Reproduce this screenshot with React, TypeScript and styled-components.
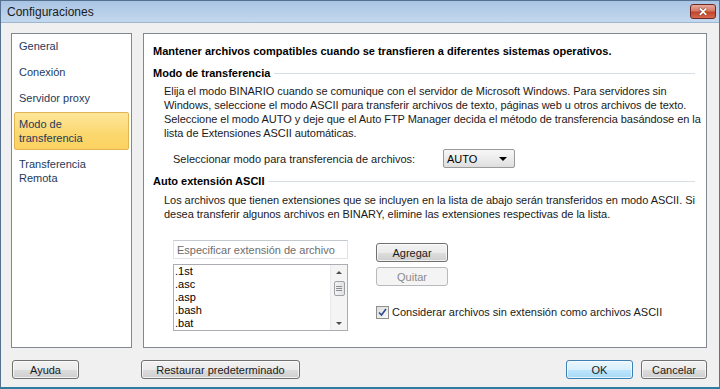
import React from "react"
import styled, { createGlobalStyle } from "styled-components"

const GlobalStyle = createGlobalStyle`
  html, body {
    margin: 0;
    padding: 0;
  }
  body {
    width: 720px;
    height: 389px;
    overflow: hidden;
    font-family: "Liberation Sans", Arial, sans-serif;
    font-size: 11px;
    color: #000;
    background: #fff;
  }
`

const Window = styled.div`
  width: 720px;
  height: 389px;
  box-sizing: border-box;
  display: flex;
  flex-direction: column;
  border: 1px solid #56708f;
  border-bottom: 2px solid #2c7d9e;
  border-right-color: #3d7ea3;
  background: #f0f0f0;
`

const TitleBar = styled.div`
  height: 21px;
  flex: none;
  display: flex;
  align-items: center;
  padding: 0 3px 0 6px;
  background: linear-gradient(#a9c4e3, #b7cfea 55%, #c3d8ee);
  border-bottom: 1px solid #9fb6cf;
`

const Title = styled.div`
  flex: 1;
  font-size: 12px;
  color: #1b1b1b;
`

const CloseButton = styled.div`
  width: 26px;
  height: 15px;
  box-sizing: border-box;
  border: 1px solid #6e2a20;
  border-radius: 3px;
  background: linear-gradient(#e6aa9d, #d67a67 45%, #c1432c 55%, #d6694f);
  display: flex;
  align-items: center;
  justify-content: center;
  color: #fff;
  font-weight: bold;
  font-size: 12px;
  text-shadow: 0 0 1px #4a1208, 0 0 1px #4a1208;
`

const Body = styled.div`
  flex: 1;
  display: flex;
  flex-direction: column;
  padding: 10px 12px 0 10px;
`

const Main = styled.div`
  height: 315px;
  display: flex;
  gap: 11px;
`

const Panel = styled.div`
  box-sizing: border-box;
  height: 100%;
  background: #fff;
  border: 1px solid #828790;
`

const NavPanel = styled(Panel)`
  width: 121px;
  flex: none;
  display: flex;
  flex-direction: column;
  gap: 2px;
  padding: 0 2px;
`

const NavItem = styled.div<{ $active?: boolean }>`
  box-sizing: border-box;
  padding: 4px 4px;
  line-height: 14px;
  color: #1e395b;
  border: 1px solid ${(p) => (p.$active ? "#e3b552" : "transparent")};
  border-radius: 2px;
  background: ${(p) =>
    p.$active ? "linear-gradient(#fde69a, #fbd76d 60%, #fbd261)" : "transparent"};
`

const ContentPanel = styled(Panel)`
  flex: 1;
  min-width: 0;
  overflow: hidden;
  padding: 10px 11px 0 9px;
  line-height: 14px;
`

const Heading = styled.div`
  font-weight: bold;
`

const GroupHeader = styled.div<{ $top: number }>`
  display: flex;
  align-items: center;
  margin-top: ${(p) => p.$top}px;
  font-weight: bold;
  &::after {
    content: "";
    flex: 1;
    margin-left: 4px;
    border-top: 1px solid #d5dfe5;
  }
`

const Paragraph = styled.p<{ $top: number }>`
  margin: ${(p) => p.$top}px 0 0 11px;
  color: #1a1a1a;
  white-space: nowrap;
  letter-spacing: -0.05px;
`

const SelectRow = styled.div`
  display: flex;
  align-items: center;
  margin: 9px 0 0 20px;
`

const SelectLabel = styled.div`
  width: 270px;
  color: #1a1a1a;
`

const Combo = styled.div`
  width: 72px;
  height: 19px;
  box-sizing: border-box;
  display: flex;
  align-items: center;
  padding: 0 7px 0 3px;
  border: 1px solid #9a9a9a;
  border-radius: 2px;
  background: linear-gradient(#f7f7f7, #ececec 50%, #dedede);
`

const ComboText = styled.div`
  flex: 1;
`

const ComboArrow = styled.div`
  width: 0;
  height: 0;
  border-left: 4px solid transparent;
  border-right: 4px solid transparent;
  border-top: 4px solid #000;
`

const ExtArea = styled.div`
  display: flex;
  gap: 28px;
  margin: 19px 0 0 20px;
`

const ExtColumn = styled.div`
  width: 175px;
  display: flex;
  flex-direction: column;
  gap: 5px;
`

const TextInput = styled.div`
  height: 19px;
  box-sizing: border-box;
  display: flex;
  align-items: center;
  padding: 0 3px;
  border: 1px solid #dfe3e8;
  border-top-color: #c5cad1;
  color: #6d6d6d;
`

const ListBox = styled.div`
  height: 67px;
  box-sizing: border-box;
  display: flex;
  border: 1px solid #abadb3;
`

const ListItems = styled.div`
  flex: 1;
  padding-left: 1px;
  line-height: 13px;
  overflow: hidden;
`

const ScrollBar = styled.div`
  width: 16px;
  display: flex;
  flex-direction: column;
  align-items: center;
  background: #f4f4f4;
  border-left: 1px solid #eaeaea;
`

const ScrollArrow = styled.div<{ $down?: boolean }>`
  height: 14px;
  display: flex;
  align-items: center;
  justify-content: center;
  &::before {
    content: "";
    border-left: 3px solid transparent;
    border-right: 3px solid transparent;
    ${(p) =>
      p.$down ? "border-top: 3px solid #4d4d4d;" : "border-bottom: 3px solid #4d4d4d;"}
  }
`

const ScrollTrack = styled.div`
  flex: 1;
  width: 100%;
  padding-top: 2px;
  display: flex;
  justify-content: center;
`

const Thumb = styled.div`
  width: 11px;
  height: 15px;
  box-sizing: border-box;
  border: 1px solid #9da1a6;
  border-radius: 2px;
  background: linear-gradient(90deg, #f3f3f3, #e2e2e2);
  display: flex;
  flex-direction: column;
  align-items: center;
  justify-content: center;
  gap: 1px;
  span {
    width: 6px;
    height: 1px;
    background: #8a8f94;
  }
`

const ActionColumn = styled.div`
  display: flex;
  flex-direction: column;
  gap: 5px;
  padding-top: 3px;
`

const Button = styled.div<{ $width: number; $disabled?: boolean; $default?: boolean }>`
  width: ${(p) => p.$width}px;
  height: 19px;
  box-sizing: border-box;
  display: flex;
  align-items: center;
  justify-content: center;
  border-radius: 3px;
  border: 1px solid
    ${(p) => (p.$disabled ? "#b6babd" : p.$default ? "#3c7fb1" : "#707070")};
  color: ${(p) => (p.$disabled ? "#8b8b8b" : "#1a1a1a")};
  background: ${(p) =>
    p.$disabled
      ? "#f4f4f4"
      : p.$default
      ? "linear-gradient(#eaf6fd, #d9f0fc 50%, #bee6fd 51%, #a7d9f5)"
      : "linear-gradient(#f2f2f2, #ebebeb 50%, #dddddd 51%, #cfcfcf)"};
  box-shadow: inset 0 0 0 1px
    ${(p) => (p.$disabled ? "transparent" : "rgba(255, 255, 255, 0.7)")};
`

const CheckRow = styled.div`
  display: flex;
  align-items: center;
  gap: 3px;
  margin-top: 14px;
  color: #1a1a1a;
  white-space: nowrap;
`

const CheckBox = styled.div`
  width: 13px;
  height: 13px;
  box-sizing: border-box;
  border: 1px solid #8f8f8f;
  background: linear-gradient(135deg, #dcdcdc, #fafafa);
  display: flex;
  align-items: center;
  justify-content: center;
`

const Footer = styled.div`
  display: flex;
  align-items: center;
  margin-top: 12px;
  padding-left: 1px;
`

const Spacer = styled.div<{ $width?: number }>`
  ${(p) => (p.$width ? `width: ${p.$width}px;` : "flex: 1;")}
`

const navItems = [
  "General",
  "Conexión",
  "Servidor proxy",
  "Modo de\ntransferencia",
  "Transferencia\nRemota",
]

const extensions = [".1st", ".asc", ".asp", ".bash", ".bat"]

export default function App() {
  return (
    <>
      <GlobalStyle />
      <Window>
        <TitleBar>
          <Title>Configuraciones</Title>
          <CloseButton>✕</CloseButton>
        </TitleBar>
        <Body>
          <Main>
            <NavPanel>
              {navItems.map((item) => (
                <NavItem key={item} $active={item.startsWith("Modo")}>
                  {item.split("\n").map((line) => (
                    <div key={line}>{line}</div>
                  ))}
                </NavItem>
              ))}
            </NavPanel>
            <ContentPanel>
              <Heading>
                Mantener archivos compatibles cuando se transfieren a diferentes sistemas
                operativos.
              </Heading>
              <GroupHeader $top={8}>Modo de transferencia</GroupHeader>
              <Paragraph $top={4}>
                Elija el modo BINARIO cuando se comunique con el servidor de Microsoft Windows.
                Para servidores sin
                <br />
                Windows, seleccione el modo ASCII para transferir archivos de texto, páginas web
                u otros archivos de texto.
                <br />
                Seleccione el modo AUTO y deje que el Auto FTP Manager decida el método de
                transferencia basándose en la
                <br />
                lista de Extensiones ASCII automáticas.
              </Paragraph>
              <SelectRow>
                <SelectLabel>Seleccionar modo para transferencia de archivos:</SelectLabel>
                <Combo>
                  <ComboText>AUTO</ComboText>
                  <ComboArrow />
                </Combo>
              </SelectRow>
              <GroupHeader $top={6}>Auto extensión ASCII</GroupHeader>
              <Paragraph $top={5}>
                Los archivos que tienen extensiones que se incluyen en la lista de abajo serán
                transferidos en modo ASCII. Si
                <br />
                desea transferir algunos archivos en BINARY, elimine las extensiones respectivas
                de la lista.
              </Paragraph>
              <ExtArea>
                <ExtColumn>
                  <TextInput>Especificar extensión de archivo</TextInput>
                  <ListBox>
                    <ListItems>
                      {extensions.map((ext) => (
                        <div key={ext}>{ext}</div>
                      ))}
                    </ListItems>
                    <ScrollBar>
                      <ScrollArrow />
                      <ScrollTrack>
                        <Thumb>
                          <span />
                          <span />
                          <span />
                        </Thumb>
                      </ScrollTrack>
                      <ScrollArrow $down />
                    </ScrollBar>
                  </ListBox>
                </ExtColumn>
                <ActionColumn>
                  <Button $width={72}>Agregar</Button>
                  <Button $width={72} $disabled>
                    Quitar
                  </Button>
                  <CheckRow>
                    <CheckBox>
                      <svg width="9" height="9" viewBox="0 0 9 9">
                        <path
                          d="M1 4.5 L3.5 7 L8 1"
                          fill="none"
                          stroke="#2a4d8f"
                          strokeWidth="1.6"
                        />
                      </svg>
                    </CheckBox>
                    Considerar archivos sin extensión como archivos ASCII
                  </CheckRow>
                </ActionColumn>
              </ExtArea>
            </ContentPanel>
          </Main>
          <Footer>
            <Button $width={67}>Ayuda</Button>
            <Spacer $width={62} />
            <Button $width={159}>Restaurar predeterminado</Button>
            <Spacer />
            <Button $width={67} $default>
              OK
            </Button>
            <Spacer $width={8} />
            <Button $width={66}>Cancelar</Button>
          </Footer>
        </Body>
      </Window>
    </>
  )
}
